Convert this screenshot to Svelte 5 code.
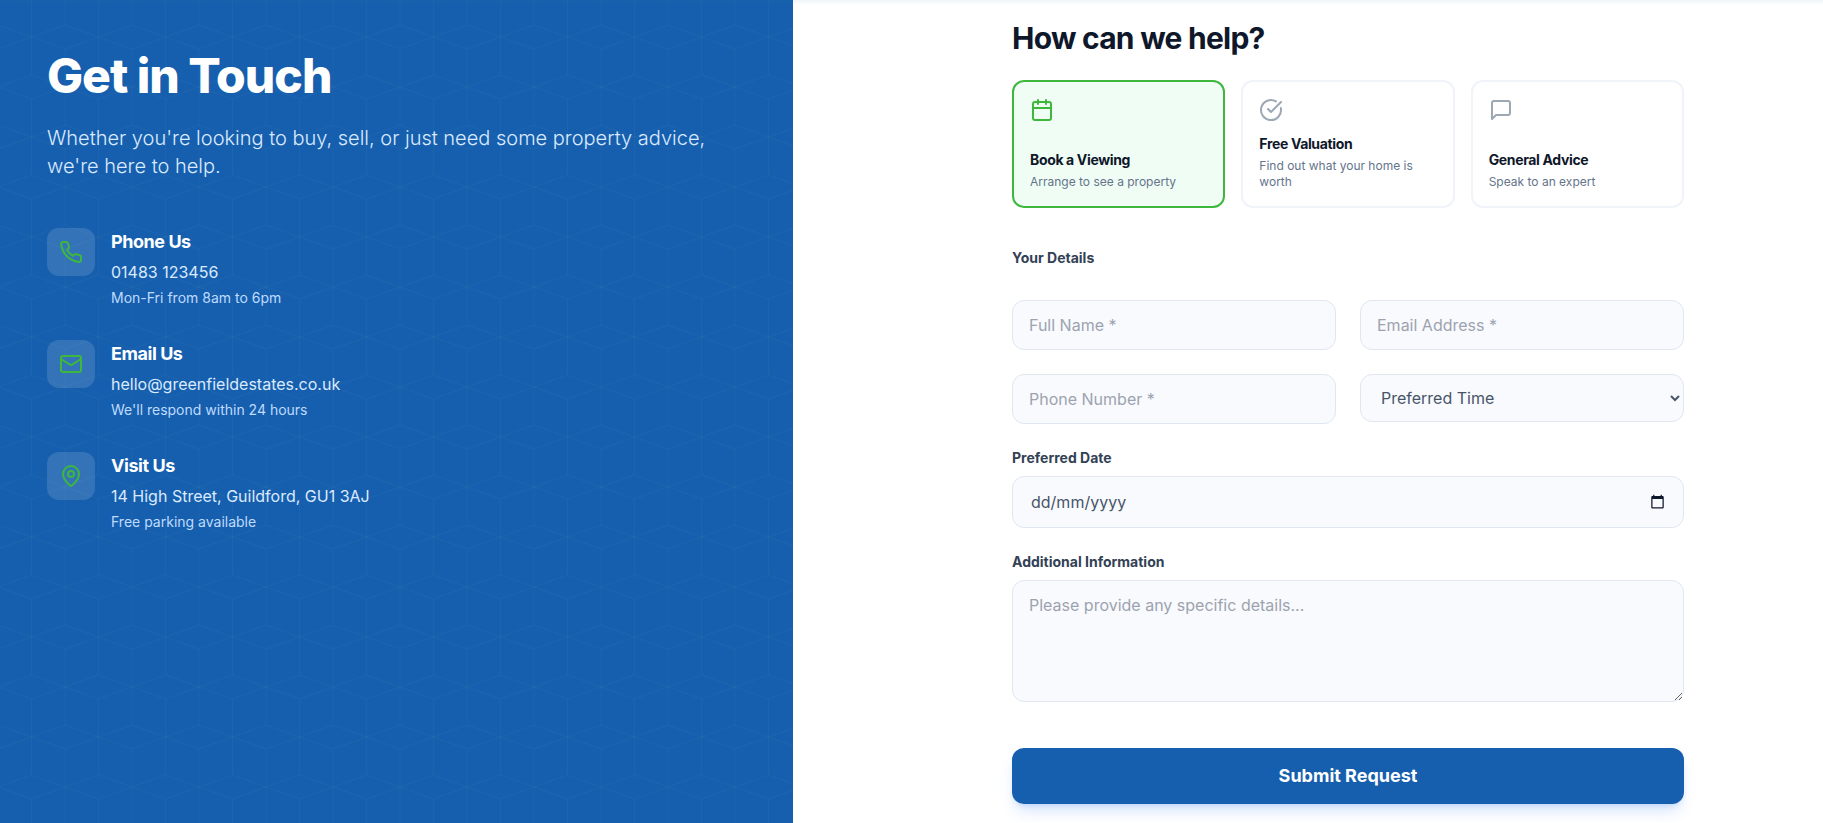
<script lang="ts">
  const contacts = [
    {
      icon: 'phone',
      title: 'Phone Us',
      value: '01483 123456',
      href: 'tel:01483123456',
      note: 'Mon-Fri from 8am to 6pm'
    },
    {
      icon: 'mail',
      title: 'Email Us',
      value: 'hello@greenfieldestates.co.uk',
      href: 'mailto:hello@greenfieldestates.co.uk',
      note: "We'll respond within 24 hours"
    },
    {
      icon: 'pin',
      title: 'Visit Us',
      value: '14 High Street, Guildford, GU1 3AJ',
      href: '#visit',
      note: 'Free parking available'
    }
  ];

  const services = [
    { id: 'viewing', icon: 'calendar', title: 'Book a Viewing', text: 'Arrange to see a property' },
    { id: 'valuation', icon: 'check', title: 'Free Valuation', text: 'Find out what your home is worth' },
    { id: 'advice', icon: 'message', title: 'General Advice', text: 'Speak to an expert' }
  ];

  let selected = $state('viewing');
  let preferredTime = $state('');
  let preferredDate = $state('');

  function submit(event: SubmitEvent) {
    event.preventDefault();
  }
</script>

{#snippet icon(name: string)}
  <svg class="icon" viewBox="0 0 24 24" aria-hidden="true">
    {#if name === 'phone'}
      <path d="M22 16.92v3a2 2 0 0 1-2.18 2 19.79 19.79 0 0 1-8.63-3.07 19.5 19.5 0 0 1-6-6 19.79 19.79 0 0 1-3.07-8.67A2 2 0 0 1 4.11 2h3a2 2 0 0 1 2 1.72 12.84 12.84 0 0 0 .7 2.81 2 2 0 0 1-.45 2.11L8.09 9.91a16 16 0 0 0 6 6l1.27-1.27a2 2 0 0 1 2.11-.45 12.84 12.84 0 0 0 2.81.7A2 2 0 0 1 22 16.92z" />
    {:else if name === 'mail'}
      <rect x="2" y="4" width="20" height="16" rx="2" />
      <path d="m22 7-8.97 5.7a1.94 1.94 0 0 1-2.06 0L2 7" />
    {:else if name === 'pin'}
      <path d="M20 10c0 4.993-5.539 10.193-7.399 11.799a1 1 0 0 1-1.202 0C9.539 20.193 4 14.993 4 10a8 8 0 0 1 16 0" />
      <circle cx="12" cy="10" r="3" />
    {:else if name === 'calendar'}
      <rect x="3" y="4" width="18" height="18" rx="2" />
      <path d="M8 2v4M16 2v4M3 10h18" />
    {:else if name === 'check'}
      <path d="M21.801 10A10 10 0 1 1 17 3.335" />
      <path d="m9 11 3 3L22 4" />
    {:else}
      <path d="M21 15a2 2 0 0 1-2 2H7l-4 4V5a2 2 0 0 1 2-2h14a2 2 0 0 1 2 2z" />
    {/if}
  </svg>
{/snippet}

<main class="contact">
  <aside class="info">
    <svg class="pattern" aria-hidden="true">
      <defs>
        <pattern id="cubes" width="67" height="100" patternUnits="userSpaceOnUse">
          <path d="M-2 25L31.500 37L65 25L98.500 37M-35.500 37L-2 25M-2 49L31.500 37L65 49L98.500 37M-35.500 37L-2 49" />
          <path d="M-2 87L31.500 75L65 87L98.500 75M-2 87L31.500 99L65 87L98.500 99" />
          <path d="M31.500 37V75M65 49V87M31.500 99V100M31.500 0V37M65 87V100M65 0V25" />
        </pattern>
      </defs>
      <rect width="100%" height="100%" fill="url(#cubes)" />
    </svg>

    <div class="info-body">
      <h1>Get in Touch</h1>
      <p class="intro">
        Whether you're looking to buy, sell, or just need some property advice, we're here to help.
      </p>

      <ul class="contact-list">
        {#each contacts as contact}
          <li class="contact-item">
            <span class="contact-icon">{@render icon(contact.icon)}</span>
            <div class="contact-text">
              <h3>{contact.title}</h3>
              <a href={contact.href}>{contact.value}</a>
              <p>{contact.note}</p>
            </div>
          </li>
        {/each}
      </ul>
    </div>
  </aside>

  <section class="form-panel">
    <form onsubmit={submit}>
      <h2>How can we help?</h2>

      <div class="services">
        {#each services as service}
          <button
            type="button"
            class="service"
            class:active={selected === service.id}
            aria-pressed={selected === service.id}
            onclick={() => (selected = service.id)}
          >
            {@render icon(service.icon)}
            <span class="service-text">
              <span class="service-title">{service.title}</span>
              <span class="service-note">{service.text}</span>
            </span>
          </button>
        {/each}
      </div>

      <fieldset class="details">
        <legend>Your Details</legend>
        <div class="fields">
          <input type="text" placeholder="Full Name *" aria-label="Full Name" required />
          <input type="email" placeholder="Email Address *" aria-label="Email Address" required />
          <input type="tel" placeholder="Phone Number *" aria-label="Phone Number" required />
          <select bind:value={preferredTime} aria-label="Preferred Time">
            <option value="">Preferred Time</option>
            <option value="morning">Morning</option>
            <option value="afternoon">Afternoon</option>
            <option value="evening">Evening</option>
          </select>
        </div>
      </fieldset>

      <div class="field">
        <label for="date">Preferred Date</label>
        <div class="date-box">
          <input
            id="date"
            class="date"
            type="text"
            inputmode="numeric"
            placeholder="dd/mm/yyyy"
            bind:value={preferredDate}
          />
          <svg class="date-icon" viewBox="0 0 24 24" aria-hidden="true">
            <path d="M20 3h-1V1h-2v2H7V1H5v2H4c-1.100 0-2 .9-2 2v16c0 1.100.9 2 2 2h16c1.100 0 2-.9 2-2V5c0-1.100-.9-2-2-2zm0 18H4V8h16v13z" />
          </svg>
        </div>
      </div>

      <div class="field">
        <label for="message">Additional Information</label>
        <textarea id="message" rows="4" placeholder="Please provide any specific details..."></textarea>
      </div>

      <button type="submit" class="submit">Submit Request</button>
    </form>
  </section>

  <div class="header-shadow"></div>
</main>

<style>
  :global(body) {
    margin: 0;
    background: #fff;
  }

  .contact {
    --blue: #165fae;
    --green: #3db83d;
    position: relative;
    display: grid;
    grid-template-columns: 43.5% 1fr;
    min-height: 100vh;
    font-family: Inter, 'Liberation Sans', sans-serif;
    font-size: 16px;
    line-height: 24px;
    color: #0f172a;
  }

  .contact * {
    box-sizing: border-box;
  }

  h1, h2, h3, p, ul {
    margin: 0;
    padding: 0;
  }

  .icon {
    width: 24px;
    height: 24px;
    flex-shrink: 0;
    fill: none;
    stroke: currentColor;
    stroke-width: 2;
    stroke-linecap: round;
    stroke-linejoin: round;
  }

  /* Left panel */
  .info {
    position: relative;
    background: var(--blue);
    color: #fff;
  }

  .pattern {
    position: absolute;
    inset: 0;
    width: 100%;
    height: 100%;
  }

  .pattern path {
    fill: none;
    stroke: #a3b8a0;
    stroke-opacity: 0.05;
    stroke-width: 1;
  }

  .info-body {
    position: relative;
    padding: 52px 47px;
  }

  h1 {
    font-size: 48px;
    line-height: 48px;
    font-weight: 800;
    letter-spacing: -1px;
  }

  .intro {
    margin: 24px 0 48px;
    font-size: 20px;
    line-height: 28px;
    font-weight: 300;
    color: #dbeafe;
  }

  .contact-list {
    display: flex;
    flex-direction: column;
    gap: 32px;
    list-style: none;
  }

  .contact-item {
    display: flex;
    gap: 16px;
  }

  .contact-icon {
    display: flex;
    align-items: center;
    justify-content: center;
    width: 48px;
    height: 48px;
    border-radius: 12px;
    background: rgba(255, 255, 255, 0.13);
    color: var(--green);
  }

  .contact-text {
    display: flex;
    flex-direction: column;
    gap: 4px;
  }

  h3 {
    font-size: 18px;
    line-height: 28px;
    font-weight: 700;
    letter-spacing: -0.025em;
  }

  .contact-text a {
    color: #dbeafe;
    text-decoration: none;
  }

  .contact-text p {
    font-size: 14px;
    line-height: 20px;
    color: #bfdbfe;
  }

  /* Form */
  .form-panel {
    padding: 20px 0 19px 80px;
  }

  form {
    max-width: 672px;
    margin: 0 auto;
  }

  h2 {
    margin-bottom: 24px;
    font-size: 30px;
    line-height: 36px;
    font-weight: 700;
    letter-spacing: -0.025em;
  }

  .services {
    display: grid;
    grid-template-columns: repeat(3, 1fr);
    gap: 16px;
  }

  .service {
    display: flex;
    flex-direction: column;
    justify-content: space-between;
    gap: 12px;
    padding: 16px;
    border: 2px solid #f0f4fa;
    border-radius: 12px;
    background: #fff;
    color: #9ca8b4;
    font-family: inherit;
    text-align: left;
    cursor: pointer;
  }

  .service.active {
    border-color: var(--green);
    background: #f0fdf4;
    color: var(--green);
  }

  .service-text {
    display: flex;
    flex-direction: column;
    gap: 4px;
  }

  .service-title {
    font-size: 14px;
    line-height: 20px;
    font-weight: 700;
    letter-spacing: -0.025em;
    color: #0f172a;
  }

  .service-note {
    font-size: 12px;
    line-height: 16px;
    color: #64748b;
  }

  .details {
    min-width: 0;
    margin: 40px 0 0;
    padding: 0;
    border: 0;
  }

  legend,
  label {
    display: block;
    padding: 0;
    font-size: 14px;
    line-height: 20px;
    font-weight: 700;
    color: #334155;
  }

  .fields {
    display: grid;
    grid-template-columns: repeat(2, 1fr);
    align-items: start;
    gap: 24px;
    margin-top: 32px;
  }

  .field {
    display: flex;
    flex-direction: column;
    gap: 8px;
    margin-top: 24px;
  }

  input,
  select,
  textarea {
    display: block;
    width: 100%;
    margin: 0;
    padding: 12px 16px;
    border: 1px solid #e0e7f1;
    border-radius: 12px;
    background: #f9fafe;
    color: #475569;
    font-family: inherit;
    font-size: 16px;
    line-height: 24px;
  }

  select {
    height: 48px;
  }

  textarea {
    resize: vertical;
  }

  ::placeholder {
    color: #9ca3af;
    opacity: 1;
  }

  .date-box {
    position: relative;
  }

  .date {
    height: 52px;
    padding: 12px 48px 12px 18px;
  }

  .date::placeholder {
    color: #475569;
  }

  .date-icon {
    position: absolute;
    top: 18px;
    right: 19px;
    width: 15px;
    height: 15px;
    fill: #0f172a;
    pointer-events: none;
  }

  .submit {
    width: 100%;
    margin-top: 46px;
    padding: 14px 32px;
    border: 0;
    border-radius: 12px;
    background: var(--blue);
    color: #fff;
    font-family: inherit;
    font-size: 18px;
    line-height: 28px;
    font-weight: 700;
    box-shadow:
      0 10px 15px -3px rgba(59, 130, 246, 0.2),
      0 4px 6px -4px rgba(59, 130, 246, 0.3);
    cursor: pointer;
  }

  .header-shadow {
    position: absolute;
    inset: 0 0 auto 0;
    height: 5px;
    background: linear-gradient(rgba(22, 120, 150, 0.07), rgba(22, 120, 150, 0));
    pointer-events: none;
  }
</style>
